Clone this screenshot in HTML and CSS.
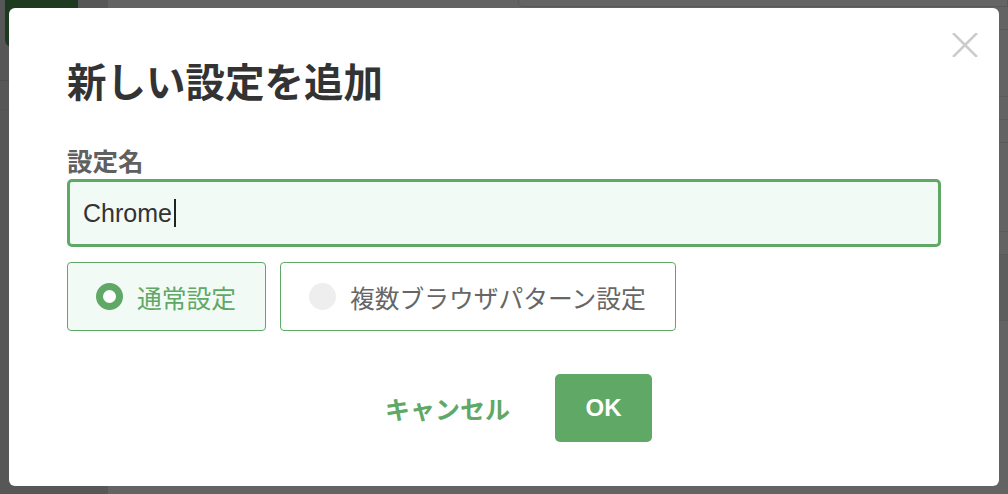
FILE: index.html
```html
<!DOCTYPE html>
<html lang="ja">
<head>
<meta charset="utf-8">
<title>新しい設定を追加</title>
<link rel="stylesheet" href="styles.css">
</head>
<body>
<div class="page">
  <aside class="sidebar">
    <div class="side-btn"></div>
    <div class="side-block"></div>
    <div class="side-row"></div>
  </aside>
  <main class="main">
    <div class="topbar"><div class="tab"></div></div>
    <div class="row r1"></div>
    <div class="row r2"></div>
    <div class="row r3 dark"></div>
  </main>
</div>

<div class="backdrop">
  <div class="modal">
    <button class="close" aria-label="閉じる">
      <svg width="26" height="24" viewBox="0 0 26 24"><path d="M1 0 L25 24 M25 0 L1 24" stroke="#cccccc" stroke-width="2.6" fill="none"/></svg>
    </button>
    <h1 class="title">新しい設定を追加</h1>
    <label class="label">設定名</label>
    <div class="input"><span class="value">Chrome</span><span class="caret"></span></div>
    <div class="options">
      <div class="option selected"><span class="radio"></span><span class="opt-text">通常設定</span></div>
      <div class="option"><span class="radio"></span><span class="opt-text">複数ブラウザパターン設定</span></div>
    </div>
    <div class="footer">
      <button class="btn cancel">キャンセル</button>
      <button class="btn ok">OK</button>
    </div>
  </div>
</div>
</body>
</html>
```

FILE: styles.css
```css
* { box-sizing: border-box; }
html, body { margin: 0; padding: 0; }
body {
  width: 1008px;
  height: 494px;
  overflow: hidden;
  font-family: "Noto Sans CJK JP", "Noto Sans", sans-serif;
  background: #f7f7f7;
}

.page {
  display: flex;
  width: 1008px;
  height: 494px;
}
.sidebar {
  width: 108px;
  background: #d9d9d9;
  display: flex;
  flex-direction: column;
}
.side-btn {
  width: 73px;
  height: 47px;
  margin-left: 5px;
  background: #4d9454;
  border-radius: 0 0 7px 7px;
}
.side-block {
  height: 81px;
  margin-top: -47px;
  background: transparent;
  border-bottom: 1px solid #c6c6c6;
}
.side-row {
  height: 29px;
  border-bottom: 1px solid #cfcfcf;
}
.main {
  flex: 1;
  display: flex;
  flex-direction: column;
}
.topbar {
  height: 30px;
  border-bottom: 1px solid #e2e2e2;
  display: flex;
  justify-content: flex-end;
}
.tab {
  width: 490px;
  height: 7px;
  border: 1px solid #dcdcdc;
  border-top: none;
  border-radius: 0 0 0 5px;
  background: #fbfbfb;
}
.row {
  height: 90px;
  border-bottom: 1px solid #e2e2e2;
  border-top: 1px solid #e2e2e2;
  margin-top: 22px;
}
.row.r1 { margin-top: 66px; height: 24px; }
.row.dark { background: #eaeaea; height: 67px; }

.backdrop {
  position: fixed;
  inset: 0;
  background: rgba(0, 0, 0, 0.6);
  display: flex;
  justify-content: center;
  align-items: flex-start;
  padding-top: 8px;
}
.modal {
  position: relative;
  width: 990px;
  height: 478px;
  background: #ffffff;
  border-radius: 6px;
  padding: 48px 58px 44px;
  display: flex;
  flex-direction: column;
}
.close {
  position: absolute;
  top: 25px;
  right: 21px;
  width: 26px;
  height: 24px;
  padding: 0;
  border: none;
  background: none;
  display: block;
}
.close svg { display: block; }

.title {
  margin: 0;
  font-size: 39.5px;
  line-height: 48px;
  font-weight: 700;
  color: #333333;
}
.label {
  display: block;
  margin-top: 40px;
  margin-bottom: 3px;
  font-size: 25.5px;
  line-height: 32px;
  font-weight: 700;
  color: #606060;
}
.input {
  height: 68px;
  border: 3px solid #5fa866;
  border-radius: 5px;
  background: #f2faf6;
  display: flex;
  align-items: center;
  padding-left: 13px;
}
.value {
  font-family: "Liberation Sans", "Noto Sans CJK JP", sans-serif;
  font-size: 25px;
  color: #333333;
  line-height: 30px;
}
.caret {
  width: 2px;
  height: 28px;
  background: #222222;
  margin-left: 2px;
}

.options {
  margin-top: 15px;
  display: flex;
  gap: 14px;
}
.option {
  height: 69px;
  border: 1px solid #5fa866;
  border-radius: 4px;
  background: #ffffff;
  display: flex;
  align-items: center;
  gap: 14px;
  padding: 0 29px 0 28px;
}
.option.selected { background: #f2faf6; }
.radio {
  width: 27px;
  height: 27px;
  border-radius: 50%;
  background: #eeeeee;
  flex: none;
}
.option.selected .radio {
  background: #ffffff;
  border: 7px solid #5fa866;
}
.opt-text {
  font-size: 24.75px;
  line-height: 32px;
  color: #666666;
}
.option.selected .opt-text { color: #5fa866; }

.footer {
  margin-top: 43px;
  display: flex;
  justify-content: center;
  gap: 14px;
  padding-right: 2px;
}
.btn {
  height: 68px;
  padding: 0 31px;
  border: none;
  border-radius: 5px;
  font-family: "Noto Sans CJK JP", sans-serif;
  font-size: 25px;
  font-weight: 700;
  cursor: pointer;
}
.cancel {
  background: transparent;
  color: #5fa866;
}
.ok {
  background: #5fa866;
  color: #ffffff;
  font-family: "Liberation Sans", "Noto Sans CJK JP", sans-serif;
  font-size: 24px;
  width: 97px;
  padding: 0;
}
```
